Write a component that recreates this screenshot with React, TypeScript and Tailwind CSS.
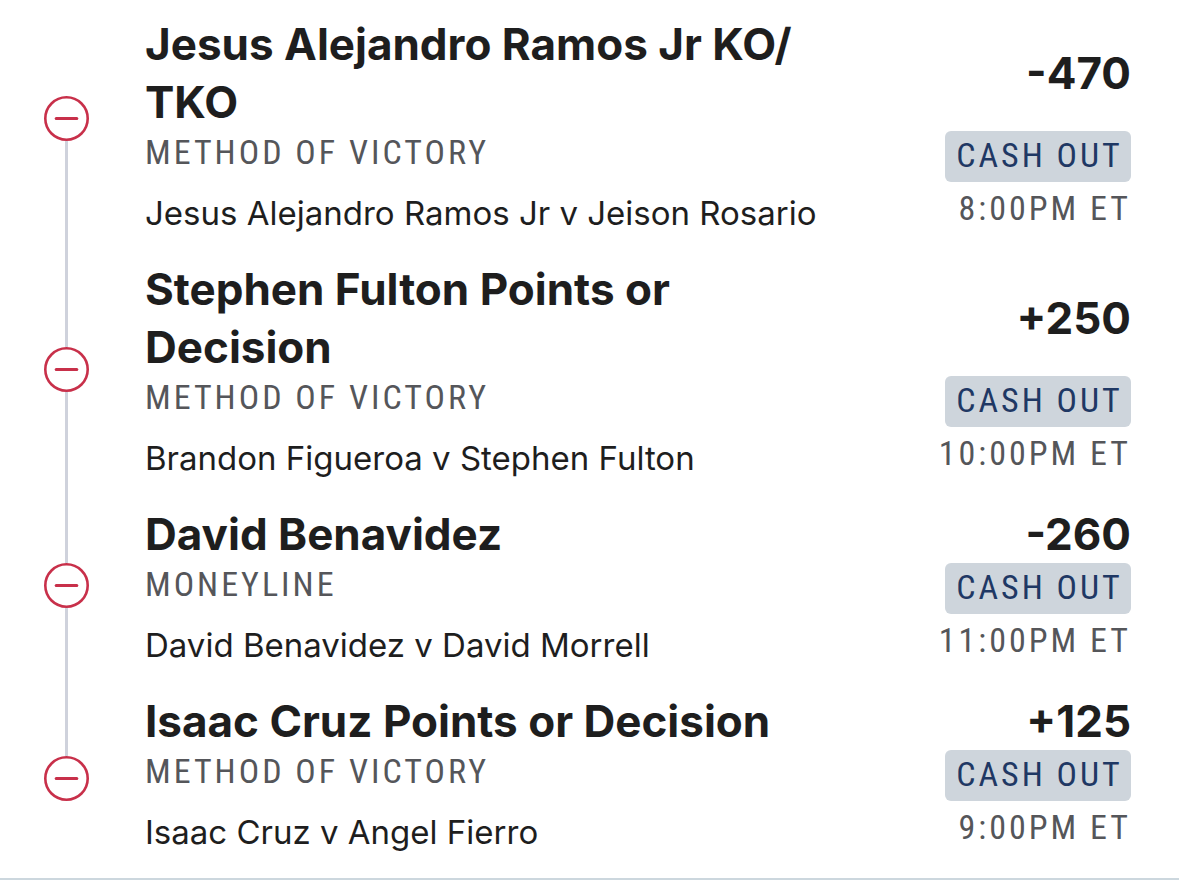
import { Fragment } from 'react';

type Leg = {
  selection: string;
  market: string;
  event: string;
  odds: string;
  time: string;
};

const legs: Leg[] = [
  {
    selection: 'Jesus Alejandro Ramos Jr KO/TKO',
    market: 'METHOD OF VICTORY',
    event: 'Jesus Alejandro Ramos Jr v Jeison Rosario',
    odds: '-470',
    time: '8:00PM ET',
  },
  {
    selection: 'Stephen Fulton Points or Decision',
    market: 'METHOD OF VICTORY',
    event: 'Brandon Figueroa v Stephen Fulton',
    odds: '+250',
    time: '10:00PM ET',
  },
  {
    selection: 'David Benavidez',
    market: 'MONEYLINE',
    event: 'David Benavidez v David Morrell',
    odds: '-260',
    time: '11:00PM ET',
  },
  {
    selection: 'Isaac Cruz Points or Decision',
    market: 'METHOD OF VICTORY',
    event: 'Isaac Cruz v Angel Fierro',
    odds: '+125',
    time: '9:00PM ET',
  },
];

const condensed = "font-['Roboto_Condensed',Roboto,sans-serif] text-[34px] leading-[42px] tracking-[3px]";

// Lets a long selection name wrap after a slash.
function Breakable({ text }: { text: string }) {
  return (
    <>
      {text.split('/').map((part, i) => (
        <Fragment key={i}>
          {i > 0 && <>/<wbr /></>}
          {part}
        </Fragment>
      ))}
    </>
  );
}

function RemoveButton({ label }: { label: string }) {
  return (
    <button type="button" aria-label={label} className="block size-[45px] shrink-0">
      <svg viewBox="0 0 45 45" className="size-full" fill="none" stroke="#c8304a">
        <circle cx="22.5" cy="22.5" r="21.2" strokeWidth="2.6" />
        <path d="M12.2 22.5h20.6" strokeWidth="3" strokeLinecap="round" />
      </svg>
    </button>
  );
}

function LegRow({ leg, first, last }: { leg: Leg; first: boolean; last: boolean }) {
  return (
    <li className="flex gap-14">
      <div className="flex flex-col items-center">
        <div className={`w-[3px] ${first ? 'flex-[1_1_0px]' : last ? 'flex-[1_1_12px] bg-[#cfd2dc]' : 'flex-[1_1_0px] bg-[#cfd2dc]'}`} />
        <RemoveButton label={`Remove ${leg.selection}`} />
        <div className={`w-[3px] ${last ? 'flex-[1_1_0px]' : first ? 'flex-[1_1_12px] bg-[#cfd2dc]' : 'flex-[1_1_0px] bg-[#cfd2dc]'}`} />
      </div>

      <div className="grid flex-1 grid-cols-[minmax(0,1fr)_auto] gap-x-[100px] py-[13px]">
        <h2 className="text-[44px] leading-[58px] font-bold">
          <Breakable text={leg.selection} />
        </h2>
        <p className="self-center text-right text-[44px] leading-[58px] font-bold">{leg.odds}</p>
        <div>
          <p className={`${condensed} text-[#55565a]`}>{leg.market}</p>
          <p className="mt-[19px] text-[33px] leading-[42px] whitespace-nowrap">{leg.event}</p>
        </div>
        <div className="flex w-[186px] flex-col items-end">
          <button type="button" className={`${condensed} h-[51px] w-full rounded-md bg-[#ced5dc] pb-1 pl-[3px] whitespace-nowrap text-[#1f3864]`}>
            CASH OUT
          </button>
          <p className={`${condensed} mt-[5px] whitespace-nowrap text-[#55565a]`}>{leg.time}</p>
        </div>
      </div>
    </li>
  );
}

export default function App() {
  return (
    <main className="border-b-2 border-[#ccd7de] bg-white pt-[2px] pr-12 pb-3 pl-11 font-['Inter','Liberation_Sans',sans-serif] text-[#1e1e1e]">
      <ul>
        {legs.map((leg, i) => (
          <LegRow key={leg.selection} leg={leg} first={i === 0} last={i === legs.length - 1} />
        ))}
      </ul>
    </main>
  );
}
